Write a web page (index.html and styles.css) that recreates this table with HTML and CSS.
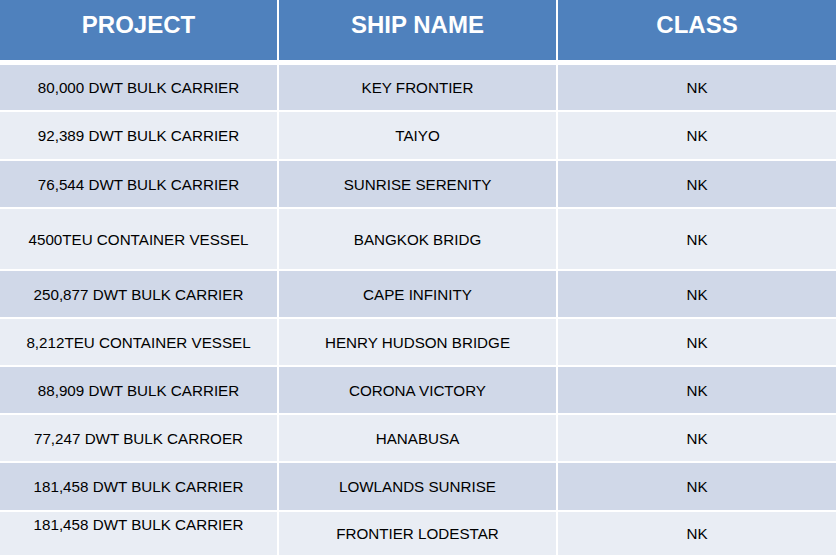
FILE: index.html
```html
<!DOCTYPE html>
<html>
<head>
<meta charset="utf-8">
<link rel="stylesheet" href="styles.css">
</head>
<body>
<div class="table">
  <div class="head">PROJECT</div>
  <div class="head">SHIP NAME</div>
  <div class="head">CLASS</div>

  <div class="cell dark">80,000 DWT BULK CARRIER</div>
  <div class="cell dark">KEY FRONTIER</div>
  <div class="cell dark">NK</div>

  <div class="cell light">92,389 DWT BULK CARRIER</div>
  <div class="cell light">TAIYO</div>
  <div class="cell light">NK</div>

  <div class="cell dark">76,544 DWT BULK CARRIER</div>
  <div class="cell dark">SUNRISE SERENITY</div>
  <div class="cell dark">NK</div>

  <div class="cell light">4500TEU CONTAINER VESSEL</div>
  <div class="cell light">BANGKOK BRIDG</div>
  <div class="cell light">NK</div>

  <div class="cell dark">250,877 DWT BULK CARRIER</div>
  <div class="cell dark">CAPE INFINITY</div>
  <div class="cell dark">NK</div>

  <div class="cell light">8,212TEU CONTAINER VESSEL</div>
  <div class="cell light">HENRY HUDSON BRIDGE</div>
  <div class="cell light">NK</div>

  <div class="cell dark">88,909 DWT BULK CARRIER</div>
  <div class="cell dark">CORONA VICTORY</div>
  <div class="cell dark">NK</div>

  <div class="cell light">77,247 DWT BULK CARROER</div>
  <div class="cell light">HANABUSA</div>
  <div class="cell light">NK</div>

  <div class="cell dark">181,458 DWT BULK CARRIER</div>
  <div class="cell dark">LOWLANDS SUNRISE</div>
  <div class="cell dark">NK</div>

  <div class="cell light">181,458 DWT BULK CARRIER<br>&nbsp;</div>
  <div class="cell light">FRONTIER LODESTAR</div>
  <div class="cell light">NK</div>
</div>
</body>
</html>
```

FILE: styles.css
```css
html, body {
  margin: 0;
  padding: 0;
  background: #ffffff;
}

body {
  width: 836px;
  height: 556px;
  overflow: hidden;
  font-family: "Liberation Sans", Arial, sans-serif;
}

.table {
  display: grid;
  grid-template-columns: 277px 277px 278px;
  grid-template-rows: 63px 45px 47px 46px 60px 46px 46px 46px 46px 47px 43px;
  column-gap: 2px;
  row-gap: 2px;
}

.head {
  background: #4f81bd;
  color: #ffffff;
  font-weight: bold;
  font-size: 24px;
  line-height: 28px;
  text-align: center;
  padding-top: 11px;
  box-sizing: border-box;
  margin-bottom: 3px;
}

.cell {
  display: flex;
  align-items: center;
  justify-content: center;
  text-align: center;
  font-size: 15.2px;
  line-height: 19px;
  color: #000000;
}

.dark {
  background: #d0d8e8;
}

.light {
  background: #e9edf4;
}
```
